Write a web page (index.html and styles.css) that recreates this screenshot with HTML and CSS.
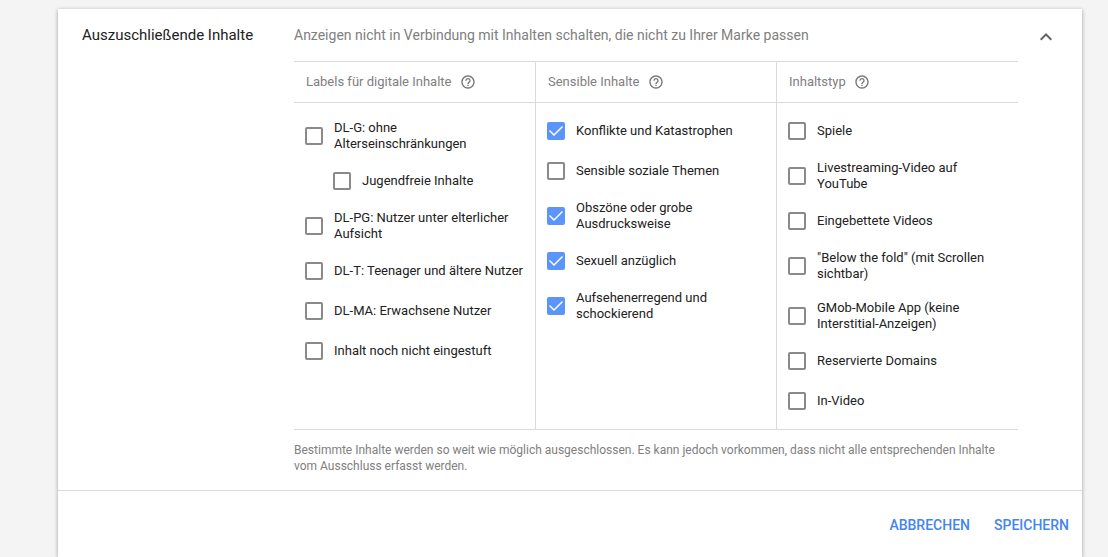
FILE: index.html
```html
<!DOCTYPE html>
<html lang="de">
<head>
    <meta charset="UTF-8">
    <meta name="viewport" content="width=device-width, initial-scale=1.0">
    <title>Auszuschließende Inhalte</title>
    <link rel="stylesheet" href="styles.css">
</head>
<body>
    <svg class="defs" aria-hidden="true">
        <symbol id="help" viewBox="0 0 24 24">
            <path d="M11 18h2v-2h-2v2zm1-16C6.480 2 2 6.480 2 12s4.480 10 10 10 10-4.480 10-10S17.520 2 12 2zm0 18c-4.410 0-8-3.590-8-8s3.590-8 8-8 8 3.590 8 8-3.590 8-8 8zm0-14c-2.210 0-4 1.790-4 4h2c0-1.100.9-2 2-2s2 .9 2 2c0 2-3 1.750-3 5h2c0-2.250 3-2.500 3-5 0-2.210-1.790-4-4-4z"/>
        </symbol>
    </svg>
    <form class="card">
        <section class="panel">
            <h2 class="title">Auszuschließende Inhalte</h2>
            <div class="content">
                <p class="intro">Anzeigen nicht in Verbindung mit Inhalten schalten, die nicht zu Ihrer Marke passen</p>
                <div class="columns">
                    <div class="column">
                        <h3 class="column-head">Labels für digitale Inhalte <svg class="help"><use href="#help"/></svg></h3>
                        <div class="options">
                            <label class="option"><input type="checkbox"><span>DL-G: ohne Alterseinschränkungen</span></label>
                            <label class="option sub"><input type="checkbox"><span>Jugendfreie Inhalte</span></label>
                            <label class="option"><input type="checkbox"><span>DL-PG: Nutzer unter elterlicher Aufsicht</span></label>
                            <label class="option"><input type="checkbox"><span>DL-T: Teenager und ältere Nutzer</span></label>
                            <label class="option"><input type="checkbox"><span>DL-MA: Erwachsene Nutzer</span></label>
                            <label class="option"><input type="checkbox"><span>Inhalt noch nicht eingestuft</span></label>
                        </div>
                    </div>
                    <div class="column">
                        <h3 class="column-head">Sensible Inhalte <svg class="help"><use href="#help"/></svg></h3>
                        <div class="options">
                            <label class="option"><input type="checkbox" checked><span>Konflikte und Katastrophen</span></label>
                            <label class="option"><input type="checkbox"><span>Sensible soziale Themen</span></label>
                            <label class="option"><input type="checkbox" checked><span>Obszöne oder grobe Ausdrucksweise</span></label>
                            <label class="option"><input type="checkbox" checked><span>Sexuell anzüglich</span></label>
                            <label class="option"><input type="checkbox" checked><span>Aufsehenerregend und schockierend</span></label>
                        </div>
                    </div>
                    <div class="column">
                        <h3 class="column-head">Inhaltstyp <svg class="help"><use href="#help"/></svg></h3>
                        <div class="options">
                            <label class="option"><input type="checkbox"><span>Spiele</span></label>
                            <label class="option"><input type="checkbox"><span>Livestreaming-Video auf YouTube</span></label>
                            <label class="option"><input type="checkbox"><span>Eingebettete Videos</span></label>
                            <label class="option"><input type="checkbox"><span>"Below the fold" (mit Scrollen sichtbar)</span></label>
                            <label class="option"><input type="checkbox"><span>GMob-Mobile App (keine Interstitial-Anzeigen)</span></label>
                            <label class="option"><input type="checkbox"><span>Reservierte Domains</span></label>
                            <label class="option"><input type="checkbox"><span>In-Video</span></label>
                        </div>
                    </div>
                </div>
                <p class="note">Bestimmte Inhalte werden so weit wie möglich ausgeschlossen. Es kann jedoch vorkommen, dass nicht alle entsprechenden Inhalte vom Ausschluss erfasst werden.</p>
            </div>
            <button type="button" class="collapse" aria-label="Minimieren">
                <svg viewBox="0 0 24 24"><path d="M12 8l-6 6 1.410 1.410L12 10.830l4.590 4.580L18 14z"/></svg>
            </button>
        </section>
        <footer class="actions">
            <button type="button">Abbrechen</button>
            <button type="submit">Speichern</button>
        </footer>
    </form>
</body>
</html>
```
FILE: styles.css
```css
*{
    box-sizing: border-box;
    margin: 0;
    padding: 0;
}
body{
    display: flex;
    min-height: 100vh;
    padding: 9px 26px 0 58px;
    background-color: #f4f4f4;
    color: #212121;
    font-family: Roboto, "Liberation Sans", sans-serif;
    font-size: 13px;
    line-height: 16px;
}
h2, h3{
    font-weight: 400;
}
button{
    border: 0;
    background: none;
    font-family: inherit;
    cursor: pointer;
}
.defs{
    position: absolute;
    width: 0;
    height: 0;
}
.card{
    flex: 1;
    background-color: #fff;
    box-shadow: 0 1px 4px rgba(0, 0, 0, 0.37);
}
.panel{
    display: flex;
    padding: 16px 24px;
    border-bottom: 1px solid #dadada;
}
.title{
    flex: 0 0 212px;
    font-size: 15px;
    line-height: 20px;
}
.content{
    flex: 1;
}
.intro{
    padding-bottom: 16px;
    color: #808080;
    font-size: 14px;
    line-height: 20px;
}
.columns{
    display: grid;
    grid-template-columns: repeat(3, 1fr);
    padding-right: 1px;
    border-top: 1px solid #dadada;
    border-bottom: 1px solid #dadada;
}
.column + .column{
    border-left: 1px solid #dadada;
}
.column-head{
    display: flex;
    align-items: center;
    gap: 8px;
    height: 41px;
    padding: 0 12px;
    border-bottom: 1px solid #dadada;
    color: #808080;
    font-size: 13px;
}
.column:last-child .column-head{
    margin-right: -1px;
}
.help{
    width: 16px;
    height: 16px;
    fill: #757575;
}
.options{
    padding: 8px 11px;
}
.option{
    display: flex;
    align-items: center;
    gap: 11px;
    min-height: 40px;
    padding: 9px 0;
}
.option.sub{
    margin-left: 28px;
}
.option input{
    appearance: none;
    flex: none;
    width: 18px;
    height: 18px;
    border: 2px solid #8a8a8a;
    border-radius: 2px;
}
.option input:checked{
    border-color: #5b95f9;
    background: #5b95f9;
}
/* tick */
.option input:checked::before{
    content: "";
    display: block;
    width: 14px;
    height: 14px;
    background: #fff;
    clip-path: polygon(0 7px, 1px 6px, 5px 10px, 13px 2px, 14px 3px, 5px 12px);
}
.note{
    padding-top: 12px;
    color: #808080;
    font-size: 12px;
}
.collapse{
    flex: none;
    align-self: flex-start;
    width: 24px;
    height: 24px;
    margin-left: 16px;
}
.collapse svg{
    display: block;
    width: 24px;
    height: 24px;
    fill: #616161;
}
.actions{
    display: flex;
    justify-content: flex-end;
    gap: 8px;
    padding: 16px 5px 14px;
}
.actions button{
    height: 36px;
    padding: 0 8px;
    color: #4285f4;
    font-size: 14px;
    font-weight: 500;
    text-transform: uppercase;
}
```
